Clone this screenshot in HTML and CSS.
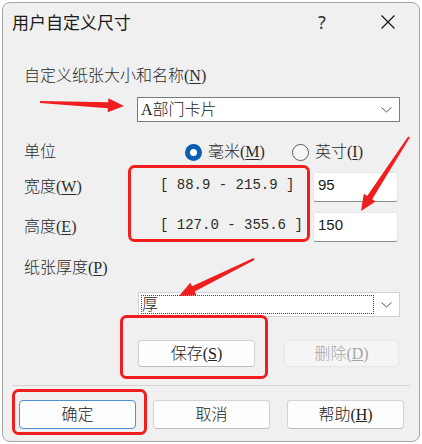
FILE: index.html
```html
<!DOCTYPE html>
<html lang="zh-CN">
<head>
<meta charset="utf-8">
<title>用户自定义尺寸</title>
<link rel="stylesheet" href="styles.css">
</head>
<body>
<div class="window">
  <div class="titlebar">
    <div class="title">用户自定义尺寸</div>
    <div class="cap help">?</div>
    <div class="cap close"><svg width="16" height="16" viewBox="0 0 16 16"><path d="M1.5 1.5L14.5 14.5M14.5 1.5L1.5 14.5" stroke="#1b1b1b" stroke-width="1.3" fill="none"/></svg></div>
  </div>
  <div class="main">
    <div class="label row-name">自定义纸张大小和名称(<u>N</u>)</div>
    <div class="combo combo-name">
      <span class="combo-text">A部门卡片</span>
      <svg class="chev" width="11" height="6" viewBox="0 0 11 6"><path d="M0.5 0.5L5.5 5L10.5 0.5" stroke="#555" stroke-width="1" fill="none"/></svg>
    </div>
    <div class="units">
      <span class="label unit-label">单位</span>
      <span class="radio first"><span class="dot on"></span><span class="label">毫米(<u>M</u>)</span></span>
      <span class="radio"><span class="dot"></span><span class="label">英寸(<u>I</u>)</span></span>
    </div>
    <div class="dims">
      <span class="label">宽度(<u>W</u>)</span><span class="range">[ 88.9 - 215.9 ]</span><span class="input">95</span>
      <span class="label">高度(<u>E</u>)</span><span class="range">[ 127.0 - 355.6 ]</span><span class="input">150</span>
    </div>
    <div class="label row-thick">纸张厚度(<u>P</u>)</div>
    <div class="combo combo-thick">
      <span class="focus">厚</span>
      <svg class="chev" width="11" height="6" viewBox="0 0 11 6"><path d="M0.5 0.5L5.5 5L10.5 0.5" stroke="#555" stroke-width="1" fill="none"/></svg>
    </div>
    <div class="btn-row">
      <button class="btn save">保存(<u>S</u>)</button>
      <button class="btn del disabled">删除(<u>D</u>)</button>
    </div>
  </div>
  <div class="sep"></div>
  <div class="footer">
    <button class="btn fbtn default">确定</button>
    <button class="btn fbtn">取消</button>
    <button class="btn fbtn">帮助(<u>H</u>)</button>
  </div>
</div>
<svg class="annot" width="422" height="444" viewBox="0 0 422 444">
  <g fill="#f01e1e">
    <polygon points="40.05,101 108.16,102.24 108.35,98.25 124,106 107.69,112.23 107.88,108.24 39.95,103"/>
    <polygon points="408.16,136.46 367.18,195.95 363.83,193.77 361,211 375.57,201.39 372.22,199.21 409.84,137.54"/>
    <polygon points="253.56,258.10 192.02,286.23 190.25,282.64 179,296 196.45,295.20 194.68,291.61 254.44,259.90"/>
  </g>
  <g fill="none" stroke="#f01e1e" stroke-width="3">
    <rect x="129.5" y="166.5" width="179" height="74" rx="5"/>
    <rect x="121.5" y="316.5" width="145" height="61" rx="5"/>
    <rect x="13.5" y="390.5" width="132" height="43" rx="5"/>
  </g>
</svg>
</body>
</html>
```

FILE: styles.css
```css
* { box-sizing: border-box; }
html, body { margin: 0; padding: 0; background: #ffffff; }
body { width: 422px; height: 444px; position: relative; overflow: hidden; }

.window {
  margin: 2px 0 0 2px;
  width: 418px;
  height: 440px;
  border: 1px solid #a6a6a6;
  border-radius: 8px;
  background: #f0f0f0;
  overflow: hidden;
  font-family: "Liberation Serif", "Noto Sans CJK SC", serif;
  font-weight: 300;
  color: #2b2b2b;
}

.titlebar {
  display: flex;
  align-items: center;
  height: 38px;
  padding-left: 9px;
  padding-right: 8px;
}
.title {
  font-family: "Noto Sans CJK SC", sans-serif;
  font-weight: 400;
  font-size: 17px;
  line-height: 20px;
  color: #1b1b1b;
}
.cap {
  width: 46px;
  height: 38px;
  display: flex;
  align-items: center;
  justify-content: center;
}
.help {
  margin-left: auto;
  margin-right: 20px;
  font-family: "Noto Sans", sans-serif;
  font-weight: 400;
  font-size: 18px;
  color: #333;
}

.main { padding: 0 19px 0 21px; }

.label {
  font-size: 16px;
  line-height: 20px;
  height: 20px;
  white-space: nowrap;
}
.label u { text-underline-offset: 2px; }

.row-name { margin-top: 25px; }

.combo {
  display: flex;
  align-items: center;
  height: 25px;
  background: #fff;
}
.combo-name {
  margin-top: 11px;
  margin-left: 113px;
  width: 263px;
  border: 1px solid #7a7a7a;
  padding-left: 3px;
}
.combo-text { font-size: 16px; line-height: 20px; color: #222; }
.chev { margin-left: auto; margin-right: 7px; }

.units {
  display: flex;
  align-items: center;
  margin-top: 20px;
  height: 20px;
}
.unit-label { width: 161px; }
.radio {
  display: flex;
  align-items: center;
  gap: 6px;
}
.radio.first { width: 107px; }
.dot {
  width: 17px;
  height: 17px;
  border-radius: 50%;
  border: 1px solid #5d5d5d;
  background: #f7f7f7;
  display: flex;
  align-items: center;
  justify-content: center;
}
.dot.on { border: none; background: #0a5fb5; }
.dot.on::after {
  content: "";
  width: 7px;
  height: 7px;
  border-radius: 50%;
  background: #fff;
}

.dims {
  display: grid;
  grid-template-columns: 136px 153px 85px;
  grid-template-rows: 30px 30px;
  row-gap: 10px;
  align-items: center;
  margin-top: 10px;
}
.range {
  font-family: "Liberation Mono", monospace;
  font-weight: 400;
  font-size: 14px;
  line-height: 18px;
  white-space: pre;
  color: #2b2b2b;
  padding-bottom: 4px;
}
.input {
  height: 30px;
  background: #fff;
  border: 1px solid #e6e6e6;
  border-bottom: 1px solid #8a8a8a;
  border-radius: 3px;
  padding: 2px 0 0 4px;
  font-family: "Liberation Sans", sans-serif;
  font-weight: 400;
  font-size: 15px;
  line-height: 20px;
  color: #1b1b1b;
}

.row-thick { margin-top: 16px; }

.combo-thick {
  margin-top: 14px;
  margin-left: 114px;
  width: 262px;
  border: 1px solid #d2d2d2;
  padding: 0 0 0 2px;
}
.focus {
  width: 233px;
  height: 19px;
  border: 1px dotted #444;
  font-size: 16px;
  line-height: 17px;
  color: #222;
}

.btn-row {
  display: flex;
  gap: 29px;
  margin-top: 23px;
  margin-left: 114px;
}
.btn {
  height: 27px;
  background: #fdfdfd;
  border: 1px solid #d3d3d3;
  border-bottom-color: #bdbdbd;
  border-radius: 4px;
  font-family: "Liberation Serif", "Noto Sans CJK SC", serif;
  font-weight: 300;
  font-size: 16px;
  line-height: 20px;
  color: #222;
  padding: 0;
}
.save { width: 117px; }
.del { width: 115px; }
.btn.disabled {
  background: #f5f5f5;
  border-color: #e6e6e6;
  color: #a6a6a6;
}

.sep {
  margin: 18px 9px 0;
  height: 1px;
  background: #d4d4d4;
}

.footer {
  display: flex;
  gap: 17px;
  margin-top: 14px;
  padding-left: 16px;
}
.fbtn { width: 117px; height: 29px; }
.btn.default { border: 1px solid #4f8fd3; }

.annot {
  position: absolute;
  top: 0;
  left: 0;
  pointer-events: none;
}
```
